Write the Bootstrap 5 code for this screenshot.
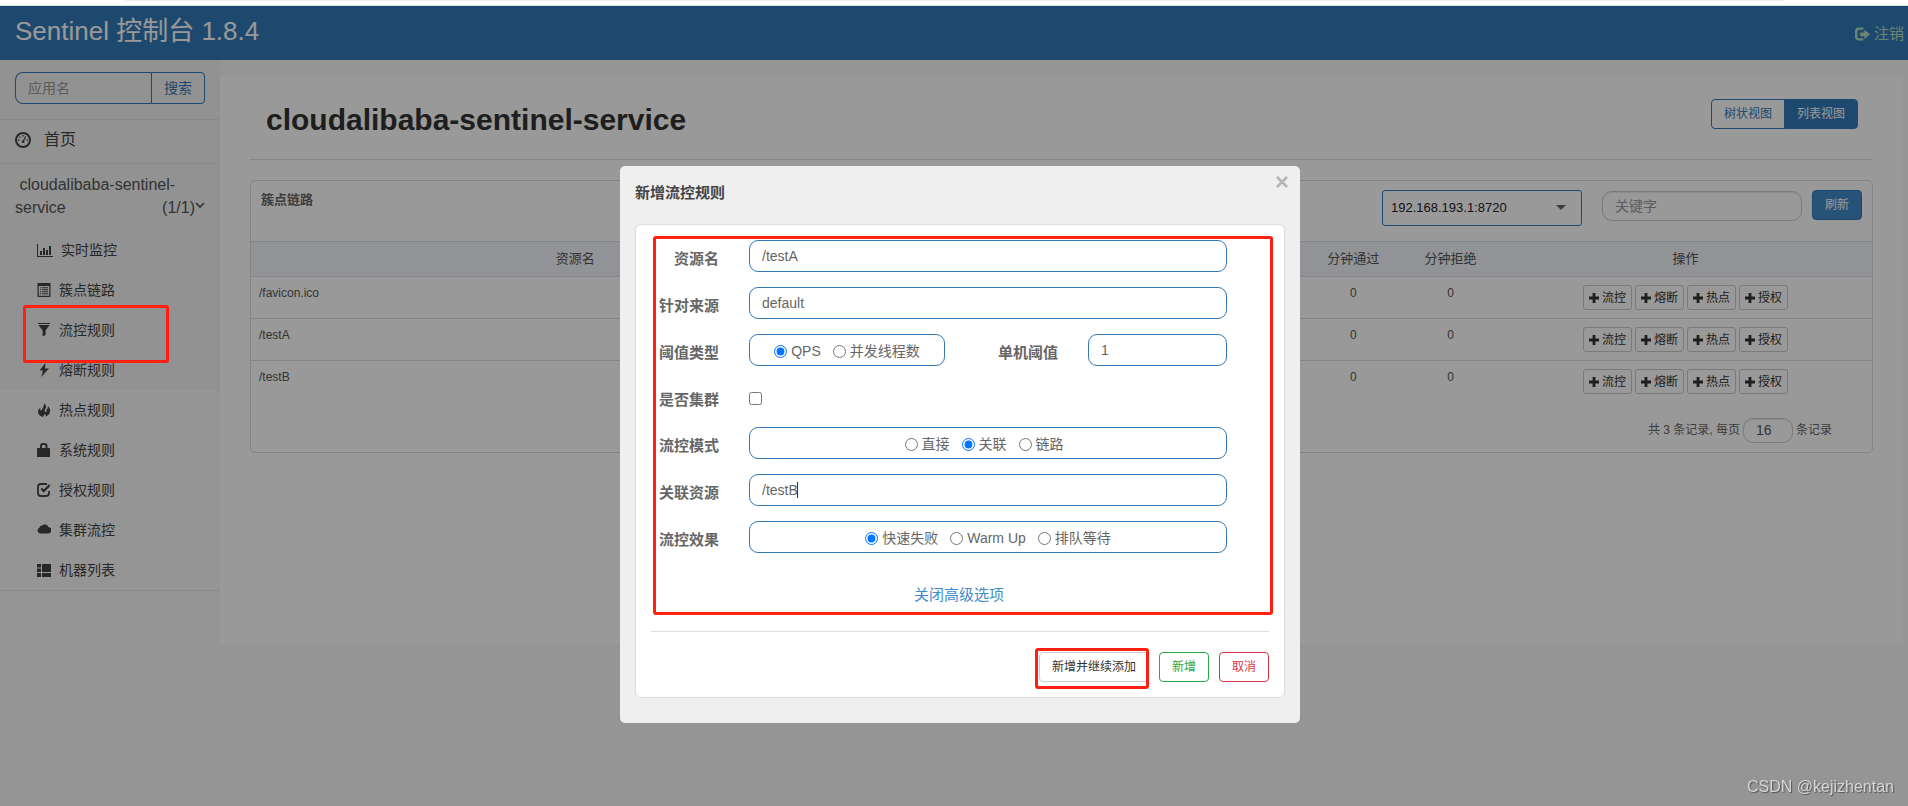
<!DOCTYPE html>
<html lang="zh-CN">
<head>
<meta charset="utf-8">
<meta name="viewport" content="width=device-width, initial-scale=1">
<title>Sentinel 控制台</title>
<link href="https://cdn.jsdelivr.net/npm/bootstrap@5.3.0/dist/css/bootstrap.min.css" rel="stylesheet">
<style>
:root{--brand:#337ab7;--line:#ddd;--red:#ff2012}
body{font-family:"Liberation Sans","Noto Sans CJK SC",sans-serif;font-size:14px;line-height:20px;color:#444;background:#f8f8f8;min-height:100vh}
a{text-decoration:none;color:inherit}
svg{display:block;fill:currentColor;flex:none}
.form-control::placeholder{color:#999}
.chrome-strip{height:6px;background:#fff;border-bottom:1px solid #d9e2e1}
.chrome-strip div{height:1px;width:87%;margin:0 auto;background:#eee}
.topbar{height:54px;background:var(--brand);color:#fff;padding-left:15px}
.topbar h1{font-size:26px;line-height:32px;font-weight:400;margin:0 0 4px}
.logout{font-size:15px;color:#b2ddc0;margin-top:2px}
.side{width:220px;flex:none}
.side-upper{background:#f4f4f4}
.search{padding:12px 15px 15px;border-bottom:1px solid #e7e7e7}
.search .form-control{height:32px;border-color:var(--brand);border-right:0;border-radius:8px 0 0 8px;font-size:14px;background:transparent}
.search .btn{height:32px;width:54px;flex:none;padding:0;font-size:14px;border:1px solid var(--brand);color:var(--brand);border-radius:0 4px 4px 0}
.home{height:44px;font-size:16px;padding:0 15px 3px;gap:13px;border-bottom:1px solid #e7e7e7}
.app-name{height:66px;padding:9px 15px 0;font-size:16px;line-height:23px;color:#555}
.side li{height:40px;padding:0 0 0 37px}
.side li a{gap:8px;height:40px}
.side .tail{border-bottom:1px solid #e7e7e7}
.content-area{padding:17px 5px 0 0}
.sheet{background:#fff;padding:0 30px;min-height:568px}
.sheet-head{height:83px;padding:22px 15px 0 16px;border-bottom:1px solid #e2e2e2}
.sheet-head h2{font-size:30px;line-height:42px;font-weight:700;margin:0;color:#333}
.views .btn{font-size:12px;line-height:18px;padding:5px 12px;height:30px;border:1px solid var(--brand);color:var(--brand);border-radius:4px}
.views .btn.active{background:var(--brand);color:#fff}
.panel{border:1px solid var(--line);border-radius:5px;margin-top:20px;height:273px}
.panel-top{height:60px;padding:9px 10px 0}
.panel-top b{font-size:13px;color:#666}
.host{width:200px;height:36px}
.host select{height:36px;border:1px solid var(--brand);border-radius:3px;font-size:13px;padding:0 8px;color:#222;background-image:none}
.host svg{position:absolute;right:16px;top:15px;fill:#666}
.panel .form-control{border-color:#ccc;color:#555;font-size:14px;border-radius:10px;box-shadow:inset 0 1px 1px rgba(0,0,0,.08)}
.keyword{width:200px;height:30px;margin:1px 10px 0 20px}
.refresh{width:50px;height:30px;padding:0;font-size:12px;background:#428bca;border:1px solid var(--brand);color:#fff;border-radius:4px}
.rules{width:100%;table-layout:fixed;font-size:12px;line-height:17px;color:#555}
.rules thead th{height:35px;background:#f2f5fa;border-top:1px solid #dadfe3;border-bottom:1px solid #dadfe3;padding-bottom:2px;font-size:13px;font-weight:400;text-align:center}
.rules td{height:42px;vertical-align:top;padding:8px;text-align:center}
.rules td:first-child{text-align:left}
.rules tr+tr td{border-top:1px solid var(--line)}
.acts{gap:3px}
.acts .btn{width:49px;height:25px;padding:0;font-size:12px;line-height:18px;border:1px solid #ccc;border-radius:3px;color:#333;gap:3px}
.pager{font-size:12px;color:#666;gap:3px;padding:15px 40px 0 0}
.pager .form-control{width:50px;height:25px;padding:0 12px}
.modal-backdrop{top:6px;height:auto;bottom:0;width:auto;right:0;opacity:.4;background:#000}
.modal-dialog{max-width:680px;margin:166px auto 0;left:6px}
.modal-content{background:#efefef;border:0;border-radius:5px;padding:0 15px 25px}
.modal-top{height:58px;padding-top:16px}
.modal-top h3{font-size:15px;line-height:22px;font-weight:700;margin:0;color:#444}
.shut{position:absolute;right:8px;top:6px;border:0;background:none;padding:0;width:20px;height:20px;color:#b5b5b5}
.inner{background:#fff;border:1px solid var(--line);border-radius:6px;padding:15px}
.fields{padding-right:42px}
.line{gap:30px;margin-bottom:15px;min-height:31px}
.line label.cap,.line span.cap{width:68px;flex:none;text-align:right;font-size:15px;line-height:22px;font-weight:700;color:#666;padding-top:8px}
.line .form-control,.opts{height:32px;border:1px solid var(--brand);border-radius:9px;font-size:14px;color:#666;padding:0 12px 1px}
.opts{gap:12px;padding:2px 0 0}
.opts label{display:flex;align-items:center;gap:4px}
.opts input,.line input[type=checkbox]{margin:0;width:13px;height:13px}
.kind{width:196px;flex:none}
.count{width:139px;flex:none}
.line label.wide-cap{flex:1 1 0}
.caret{position:absolute;left:48px;top:8px;width:1px;height:16px;background:#333}
.fold{font-size:15px;line-height:22px;color:#428bca;margin:31px 0 25px;padding-right:2px}
.inner hr{margin:0 0 20px;border-top:1px solid #ddd;opacity:1}
.foot{gap:10px}
.foot .btn{height:30px;padding:0 12px;font-size:12px;line-height:18px;border:1px solid #ccc;border-radius:4px;background:#fff;color:#333}
.foot .ok{border-color:#28a745;color:#28a745}
.foot .no{border-color:#dc3545;color:#dc3545}
.hot{position:absolute;border:3px solid var(--red);border-radius:3px;pointer-events:none}
.hot-menu{left:23px;top:-5px;width:146px;height:58px;z-index:1060}
.hot-form{inset:-4px -4px -62px 2px}
.hot-btn{inset:-4px 0 -7px -4px}
.sign{position:fixed;right:14px;bottom:7px;font-size:16px;line-height:24px;color:#d6d6d6;text-shadow:1px 1px 1px #555;z-index:1060}
</style>
</head>
<body>
<svg width="0" height="0" class="position-absolute" aria-hidden="true">
  <symbol id="plus" viewBox="0 0 10 10"><path d="M3.6 0h2.8v3.6H10v2.8H6.4V10H3.6V6.4H0V3.6h3.6z"/></symbol>
</svg>
<div class="chrome-strip"><div></div></div>
<header class="topbar d-flex align-items-center justify-content-between">
  <h1>Sentinel 控制台 1.8.4</h1>
  <a href="#" class="logout d-flex align-items-center pe-1">
    <svg class="me-1" width="15" height="14" viewBox="0 0 16 14"><path d="M9 0H4Q0 0 0 4v6q0 4 4 4h5v-2.400H4.400Q2.600 11.600 2.600 10V4q0-1.600 1.800-1.600H9zM10 2.500v3H5.500v4H10v3L16 7.300z"/></svg>注销</a>
</header>
<div class="d-flex">
  <nav class="side">
    <div class="side-upper">
      <form class="search d-flex">
        <input class="form-control" placeholder="应用名" aria-label="应用名">
        <button type="button" class="btn">搜索</button>
      </form>
      <a href="#" class="home d-flex align-items-center">
        <svg width="16" height="16" viewBox="0 0 16 16"><path fill-rule="evenodd" d="M8 0a8 8 0 1 1 0 16A8 8 0 0 1 8 0zm0 2a6 6 0 1 0 0 12A6 6 0 0 0 8 2zM7.300 3h1.400v1.400H7.300zM3 7.300h1.400v1.400H3zm8.600 0H13v1.400h-1.400zM4.400 4.400h1.300v1.300H4.400zM10.300 4l1 .5-2.100 4.200a1.400 1.400 0 1 1-1.100-.5z"/></svg>首页</a>
      <a href="#" class="app-name d-block">&nbsp;cloudalibaba-sentinel-<span class="d-flex justify-content-between"><span>service</span><span class="d-flex align-items-center">(1/1)<svg class="mb-1" width="10" height="7" viewBox="0 0 10 7"><path d="M1 1l4 4 4-4" fill="none" stroke="currentColor" stroke-width="1.700"/></svg></span></span></a>
      <ul class="list-unstyled m-0">
        <li><a href="#" class="d-flex align-items-center"><svg width="16" height="13" viewBox="0 0 16 13"><path d="M0 0h1v12h15v1H0zM3 7h2v4H3zM6 4h2v7H6zM9 6h2v5H9zM12 2h2v9h-2z"/></svg>实时监控</a></li>
        <li><a href="#" class="d-flex align-items-center"><svg width="14" height="14" viewBox="0 0 14 14"><path fill-rule="evenodd" d="M.5 0h13v14H.5zM1.800 3v9.700h10.400V3zM3 4.300h1.200v1H3zM5 4.300h6v1H5zM3 6.300h1.200v1H3zM5 6.300h6v1H5zM3 8.300h1.200v1H3zM5 8.300h6v1H5zM3 10.300h1.200v1H3zM5 10.300h6v1H5z"/></svg>簇点链路</a></li>
        <li class="position-relative"><a href="#" class="d-flex align-items-center"><svg width="14" height="14" viewBox="0 0 14 14"><path d="M1 0h12v1H1zM1.500 2h11L8.600 7.400V12L5.600 13.500V7.400z"/></svg>流控规则</a><i class="hot hot-menu"></i></li>
        <li><a href="#" class="d-flex align-items-center"><svg width="14" height="14" viewBox="0 0 14 14"><path d="M8.500 0L2.500 7.600H6L4.200 14 12 5.600H8z"/></svg>熔断规则</a></li>
      </ul>
    </div>
    <ul class="list-unstyled m-0 tail">
      <li><a href="#" class="d-flex align-items-center"><svg width="14" height="14" viewBox="0 0 14 14"><path d="M7 0c2 2 3 4 1.200 6.200-1 1.300-.6 2.600.5 2.700C10 9 9.700 7.500 9.300 6.600c2-.6 1.300-2.600 1.700-3.600 1 1.300 2.700 3.500 2 6-.6 2.500-2.700 4.200-4.600 4.500.8-1 .3-2-.5-2.500-.6 1.600-2 1.600-1.700 3C3.500 13.500 1 11.500 1 9c0-2 1.500-3.300 2.200-4.600.2 1.300 0 2.600.7 3.300C5 6.500 7.700 3 7 0z"/></svg>热点规则</a></li>
      <li><a href="#" class="d-flex align-items-center"><svg width="14" height="14" viewBox="0 0 14 14"><path fill-rule="evenodd" d="M3 5V3q0-3 3-3h1.500q3 0 3 3v2H12q1 0 1 1v8H0V6q0-1 1-1zM5 5h3.500V3q0-1-1-1H6Q5 2 5 3z"/></svg>系统规则</a></li>
      <li><a href="#" class="d-flex align-items-center"><svg width="14" height="14" viewBox="0 0 14 14"><path d="M10 1H4Q1 1 1 4v6q0 3 3 3h5q3 0 3-3V8" fill="none" stroke="currentColor" stroke-width="1.800"/><path d="M4.300 5.500l2.400 2.600L12.700 2" fill="none" stroke="currentColor" stroke-width="2.200"/></svg>授权规则</a></li>
      <li><a href="#" class="d-flex align-items-center"><svg width="14" height="14" viewBox="0 0 14 14"><path d="M3 10.500a3 3 0 0 1-.6-5.700A2.600 2.600 0 0 1 5 2.600 3.800 3.800 0 0 1 11.300 4 3.200 3.200 0 0 1 11 10.500z"/></svg>集群流控</a></li>
      <li><a href="#" class="d-flex align-items-center"><svg width="14" height="13" viewBox="0 0 14 13"><path d="M0 0h4v3.500H0zM5 0h9v8H5zM0 4.500h4V8H0zM0 9h4v4H0zM5 9h9v4H5z"/></svg>机器列表</a></li>
    </ul>
  </nav>
  <main class="content-area flex-grow-1">
    <div class="sheet">
      <div class="sheet-head d-flex justify-content-between align-items-start">
        <h2>cloudalibaba-sentinel-service</h2>
        <div class="btn-group views">
          <button type="button" class="btn">树状视图</button>
          <button type="button" class="btn active">列表视图</button>
        </div>
      </div>
      <section class="panel">
        <div class="panel-top d-flex align-items-start">
          <b class="me-auto">簇点链路</b>
          <div class="host position-relative">
            <select class="form-select" aria-label="机器"><option>192.168.193.1:8720</option></select>
            <svg width="10" height="5" viewBox="0 0 10 5"><path d="M0 0h10L5 5z"/></svg>
          </div>
          <input class="form-control keyword" placeholder="关键字" aria-label="关键字">
          <button type="button" class="btn refresh">刷新</button>
        </div>
        <table class="rules">
          <colgroup><col style="width:40%"><col style="width:25%"><col style="width:6%"><col style="width:6%"><col style="width:23%"></colgroup>
          <thead><tr><th>资源名</th><th></th><th>分钟通过</th><th>分钟拒绝</th><th>操作</th></tr></thead>
          <tbody id="rows"></tbody>
        </table>
        <div class="pager d-flex align-items-center justify-content-end">
          <label for="size">共 3 条记录, 每页</label>
          <input id="size" class="form-control" value="16">
          <span>条记录</span>
        </div>
      </section>
    </div>
  </main>
</div>

<div class="modal-backdrop"></div>
<div class="modal d-block overflow-hidden" tabindex="-1" role="dialog" aria-labelledby="dlg">
  <div class="modal-dialog">
    <div class="modal-content">
      <div class="modal-top">
        <h3 id="dlg">新增流控规则</h3>
        <button type="button" class="shut" aria-label="关闭"><svg width="20" height="20" viewBox="0 0 20 20"><path d="M5 5l10 10M15 5L5 15" stroke="currentColor" stroke-width="2.800"/></svg></button>
      </div>
      <div class="inner">
        <div class="position-relative">
          <div class="fields">
          <div class="line d-flex"><label class="cap" for="res">资源名</label><input id="res" class="form-control" value="/testA"></div>
          <div class="line d-flex"><label class="cap" for="src">针对来源</label><input id="src" class="form-control" value="default"></div>
          <div class="line d-flex">
            <span class="cap">阈值类型</span>
            <div class="opts kind d-flex align-items-center justify-content-center">
              <label><input type="radio" name="grade" checked>QPS</label>
              <label><input type="radio" name="grade">并发线程数</label>
            </div>
            <label class="cap wide-cap" for="cnt">单机阈值</label>
            <div class="count"><input id="cnt" class="form-control" value="1"></div>
          </div>
          <div class="line d-flex"><label class="cap" for="clu">是否集群</label><div class="d-flex align-items-center pt-1"><input id="clu" type="checkbox"></div></div>
          <div class="line d-flex">
            <span class="cap">流控模式</span>
            <div class="opts pe-2 flex-grow-1 d-flex align-items-center justify-content-center">
              <label><input type="radio" name="mode">直接</label>
              <label><input type="radio" name="mode" checked>关联</label>
              <label><input type="radio" name="mode">链路</label>
            </div>
          </div>
          <div class="line d-flex"><label class="cap" for="ref">关联资源</label><div class="position-relative flex-grow-1"><input id="ref" class="form-control" value="/testB"><i class="caret"></i></div></div>
          <div class="line d-flex">
            <span class="cap">流控效果</span>
            <div class="opts flex-grow-1 d-flex align-items-center justify-content-center">
              <label><input type="radio" name="fx" checked>快速失败</label>
              <label><input type="radio" name="fx">Warm Up</label>
              <label><input type="radio" name="fx">排队等待</label>
            </div>
          </div>
          </div>
          <i class="hot hot-form"></i>
        </div>
        <div class="fold text-center"><a href="#">关闭高级选项</a></div>
        <hr>
        <div class="foot d-flex justify-content-end">
          <div class="position-relative"><button type="button" class="btn">新增并继续添加</button><i class="hot hot-btn"></i></div>
          <button type="button" class="btn ok">新增</button>
          <button type="button" class="btn no">取消</button>
        </div>
      </div>
    </div>
  </div>
</div>
<div class="sign">CSDN @kejizhentan</div>
<script src="https://cdn.jsdelivr.net/npm/bootstrap@5.3.0/dist/js/bootstrap.bundle.min.js"></script>
<script>
const acts = ['流控', '熔断', '热点', '授权'].map(t =>
  `<button type="button" class="btn d-flex align-items-center justify-content-center"><svg width="10" height="10"><use href="#plus"/></svg>${t}</button>`).join('');
document.getElementById('rows').innerHTML = ['/favicon.ico', '/testA', '/testB'].map(n =>
  `<tr><td>${n}</td><td></td><td>0</td><td>0</td><td><div class="acts d-flex justify-content-center">${acts}</div></td></tr>`).join('');
</script>
</body>
</html>
